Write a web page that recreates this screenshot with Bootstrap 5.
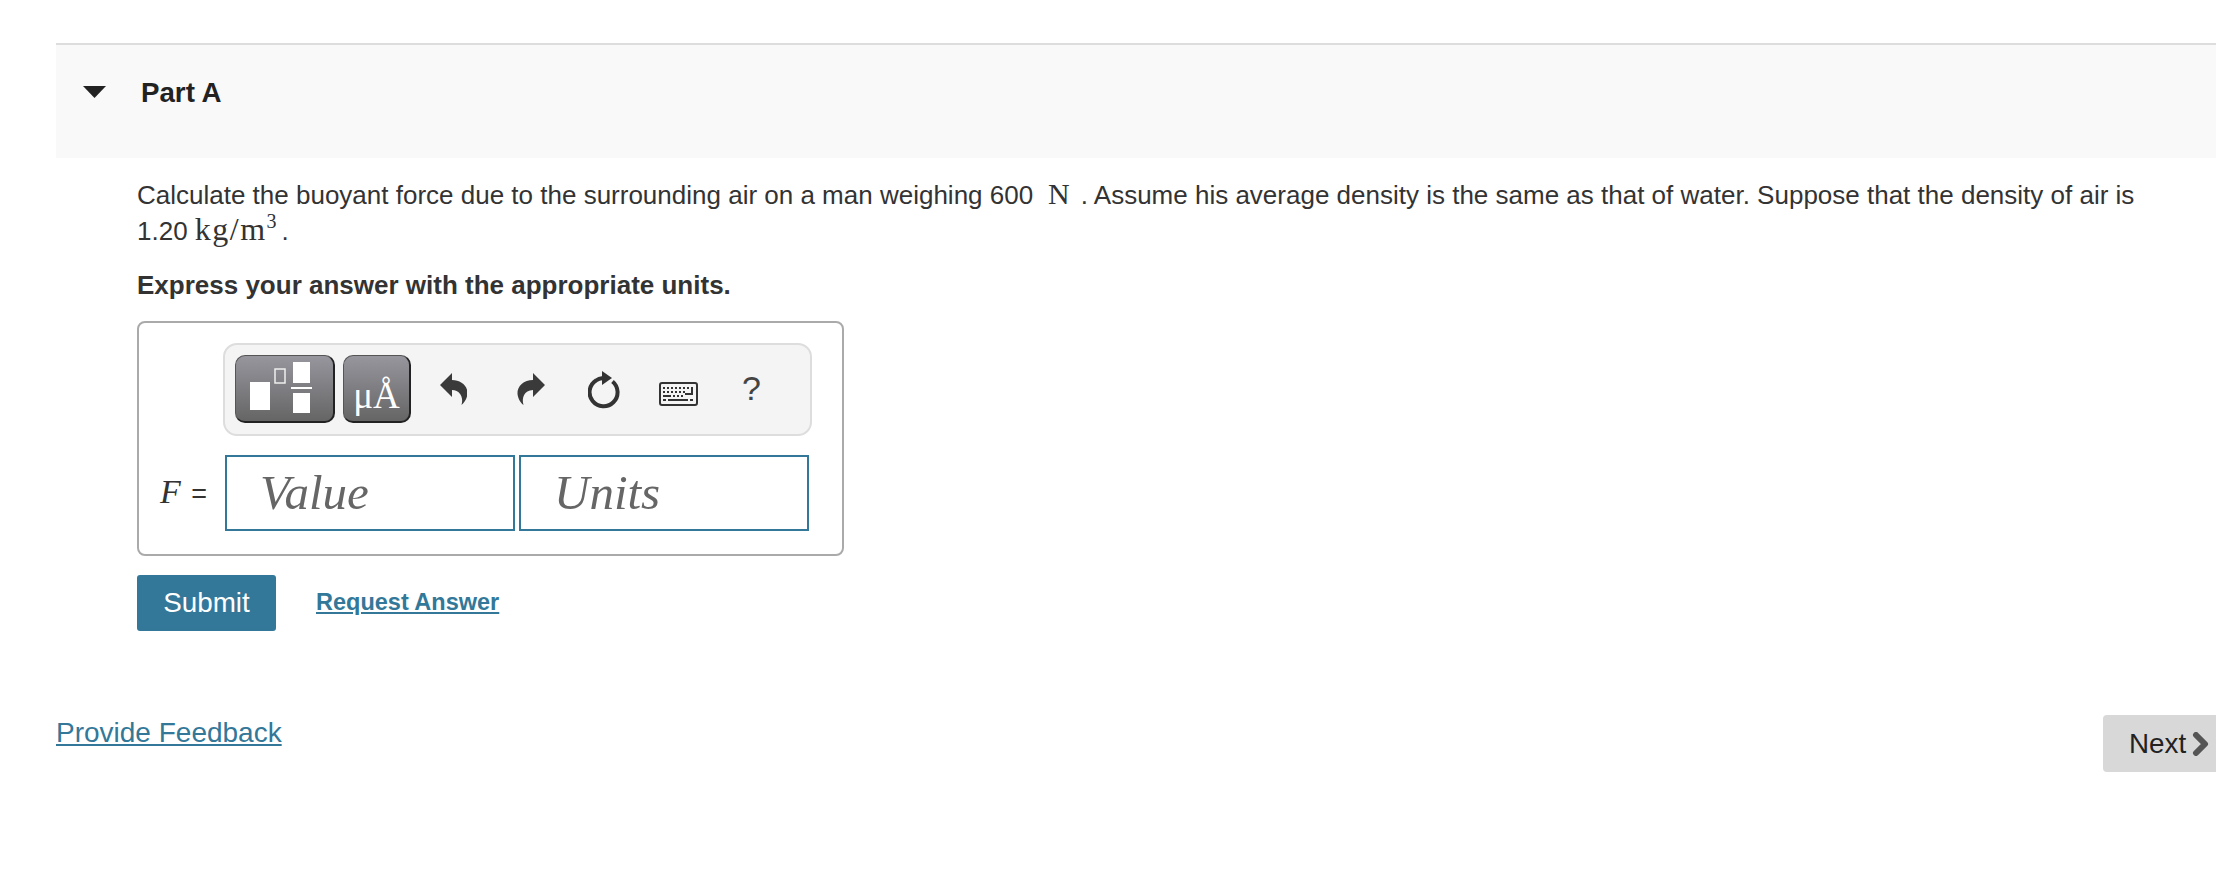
<!DOCTYPE html>
<html lang="en">
<head>
<meta charset="utf-8">
<title>Part A</title>
<link href="https://cdn.jsdelivr.net/npm/bootstrap@5.3.0/dist/css/bootstrap.min.css" rel="stylesheet">
<style>
html,body{background:#fff;overflow:hidden}
body{font-family:"Liberation Sans",Arial,sans-serif;color:#333;height:874px}
.page-wrap{padding:43px 0 0 56px}
.part-head{border-top:2px solid #ddd;background:#f9f9f9;height:115px;padding:26px 0 0 27px;color:#222}
.part-head svg{width:23px;height:12px;margin:15px 35px 0 0;flex:none}
.part-title{font-size:27.7px;font-weight:700;line-height:44px}
.part-body{padding:19px 80px 0 81px;font-size:26px;line-height:34px}
.prob{margin:0}
.math{font-family:"Liberation Serif",serif;font-size:30px}
.math-n{padding-right:4px}
.math-u{font-size:32px;letter-spacing:1.5px}
.math-u sup{font-size:20px;top:-.6em;letter-spacing:0;margin-right:5px}
.instr{margin:20px 0 0;font-weight:700}
.ans-box{width:707px;height:235px;margin-top:19px;border:2px solid #aaa;border-radius:8px;padding:20px 0 0 84px;position:relative}
.tool-bar{width:589px;height:93px;border:2px solid #ddd;border-radius:14px;background:#f4f4f4;padding:10px 0 0 10px}
.tpl-btn{height:68px;border-radius:10px;background:linear-gradient(#97969e,#656565);border:1px solid #555;border-bottom:2px solid #222;border-right:2px solid #222;color:#fff;padding:0}
.tpl-a{width:100px}
.tpl-b{width:68px;margin-left:8px;font-family:"Liberation Serif",serif;font-size:37px;line-height:1;padding-top:14px;text-align:center}
.ic{flex:none;display:block}
.ic-undo{width:27px;height:32px;margin:18px 0 0 29px}
.ic-redo{width:29px;height:32px;margin:18px 0 0 50px}
.ic-reload{width:33px;height:38px;margin:16px 0 0 42px}
.ic-kbd{width:39px;height:24px;margin:27px 0 0 38px}
.qm{font-size:34px;line-height:40px;color:#444;margin:13px 0 0 44px}
.ans-row{margin:19px 0 0 -84px}
.var-lbl{width:86px;padding-left:21px;font-size:27px;white-space:nowrap;color:#333}
.var-lbl i{font-family:"Liberation Serif",serif;font-size:34px;margin-right:3px}
.ans-in{width:290px;height:76px;border:2px solid #337899;font-family:"Liberation Serif",serif;font-style:italic;font-size:49px;color:#666;padding:0 0 0 33px;line-height:71px;background:#fff}
.ans-in + .ans-in{margin-left:4px}
.act-row{margin-top:19px}
.sub-btn{width:139px;height:56px;background:#337899;color:#fff;border:0;border-radius:3px;font-size:27.8px;padding:0}
.req-link{margin:-3px 0 0 40px;font-size:23.5px;font-weight:700;color:#337899}
.foot-row{margin-top:84px;align-items:flex-start}
.fb-link{font-size:28px;color:#337899;line-height:36px}
.next-btn{width:113px;height:57px;background:#d8d8d8;border:0;border-radius:4px 0 0 4px;font-size:27.8px;color:#222;padding:0 0 0 26px;text-align:left}
.next-btn svg{width:17px;height:24px;margin-left:6px;vertical-align:-3px}
</style>
</head>
<body>
<div class="page-wrap">
  <section>
    <div class="part-head d-flex align-items-start">
      <svg viewBox="0 0 23 12" aria-hidden="true"><path d="M0 0H23L11.500 12Z" fill="#222"/></svg>
      <div class="part-title">Part A</div>
    </div>
    <div class="part-body">
      <p class="prob"><span>Calculate the buoyant force due to the surrounding air on a man weighing 600 </span><span class="math math-n">&nbsp;N</span><span> . Assume his average density is the same as that of water. Suppose that the density of air is</span><br><span>1.20 </span><span class="math math-u">kg/m<sup>3</sup></span><span>.</span></p>
      <p class="instr">Express your answer with the appropriate units.</p>
      <div class="ans-box">
        <div class="tool-bar d-flex align-items-start">
          <button type="button" class="tpl-btn tpl-a" aria-label="Templates">
            <svg width="96" height="66" viewBox="0 0 96 66" class="d-block" aria-hidden="true">
              <rect x="14" y="26" width="20" height="28" fill="#fff"/>
              <rect x="39" y="13" width="10" height="14" fill="none" stroke="#eee" stroke-width="1.500"/>
              <rect x="57" y="6" width="17" height="21" fill="#fff"/>
              <rect x="55" y="31" width="21" height="2" fill="#fff"/>
              <rect x="57" y="37" width="17" height="20" fill="#fff"/>
            </svg>
          </button>
          <button type="button" class="tpl-btn tpl-b">μÅ</button>
          <svg class="ic ic-undo" viewBox="0 0 27 32" aria-hidden="true"><path d="M0 12 12 0V7C21 7 28 13 27.500 21 27 26 24 30 21.500 32 23.500 25 21 17.500 12 17V24Z" fill="#3a3a3a"/></svg>
          <svg class="ic ic-redo" viewBox="0 0 27 32" aria-hidden="true"><path d="M27 12 15 0V7C6 7-1 13-.5 21 0 26 3 30 5.500 32 3.500 25 6 17.500 15 17V24Z" fill="#3a3a3a"/></svg>
          <svg class="ic ic-reload" viewBox="0 0 33 38" aria-hidden="true"><path d="M24.500 10.500A14 14 0 1 1 8 9.500C10 8 12.500 7.300 15 7" fill="none" stroke="#333" stroke-width="4"/><path d="M14 0 24 7 14 14Z" fill="#333"/></svg>
          <svg class="ic ic-kbd" viewBox="0 0 39 24" aria-hidden="true">
            <rect x="1" y="1" width="37" height="22" rx="2" fill="#f4f4f4" stroke="#333" stroke-width="2"/>
            <path d="M4 5h2v2H4zM8 5h2v2H8zM12 5h2v2h-2zM16 5h2v2h-2zM20 5h2v2h-2zM24 5h2v2h-2zM28 5h2v2h-2zM4 9h2v2H4zM8 9h2v2H8zM12 9h2v2h-2zM16 9h2v2h-2zM20 9h2v2h-2zM24 9h2v2h-2zM32 5h2v8H26v-2h6zM4 13h8v2H4zM14 13h2v2h-2zM18 13h2v2h-2zM22 13h2v2h-2zM4 17h3v2H4zM9 17h20v2H9zM31 17h3v2h-3z" fill="#333"/>
          </svg>
          <span class="qm">?</span>
        </div>
        <div class="ans-row d-flex align-items-center">
          <div class="var-lbl"><i>F</i> =</div>
          <div class="ans-in">Value</div>
          <div class="ans-in">Units</div>
        </div>
      </div>
      <div class="act-row d-flex align-items-center">
        <button type="button" class="sub-btn">Submit</button>
        <a href="#" class="req-link">Request Answer</a>
      </div>
    </div>
    <div class="foot-row d-flex justify-content-between">
      <a href="#" class="fb-link">Provide Feedback</a>
      <button type="button" class="next-btn">Next<svg viewBox="0 0 17 24" aria-hidden="true"><path d="M4 3 13 12 4 21" fill="none" stroke="#555" stroke-width="6" stroke-linecap="round" stroke-linejoin="round"/></svg></button>
    </div>
  </section>
</div>
<script src="https://cdn.jsdelivr.net/npm/bootstrap@5.3.0/dist/js/bootstrap.bundle.min.js"></script>
</body>
</html>
